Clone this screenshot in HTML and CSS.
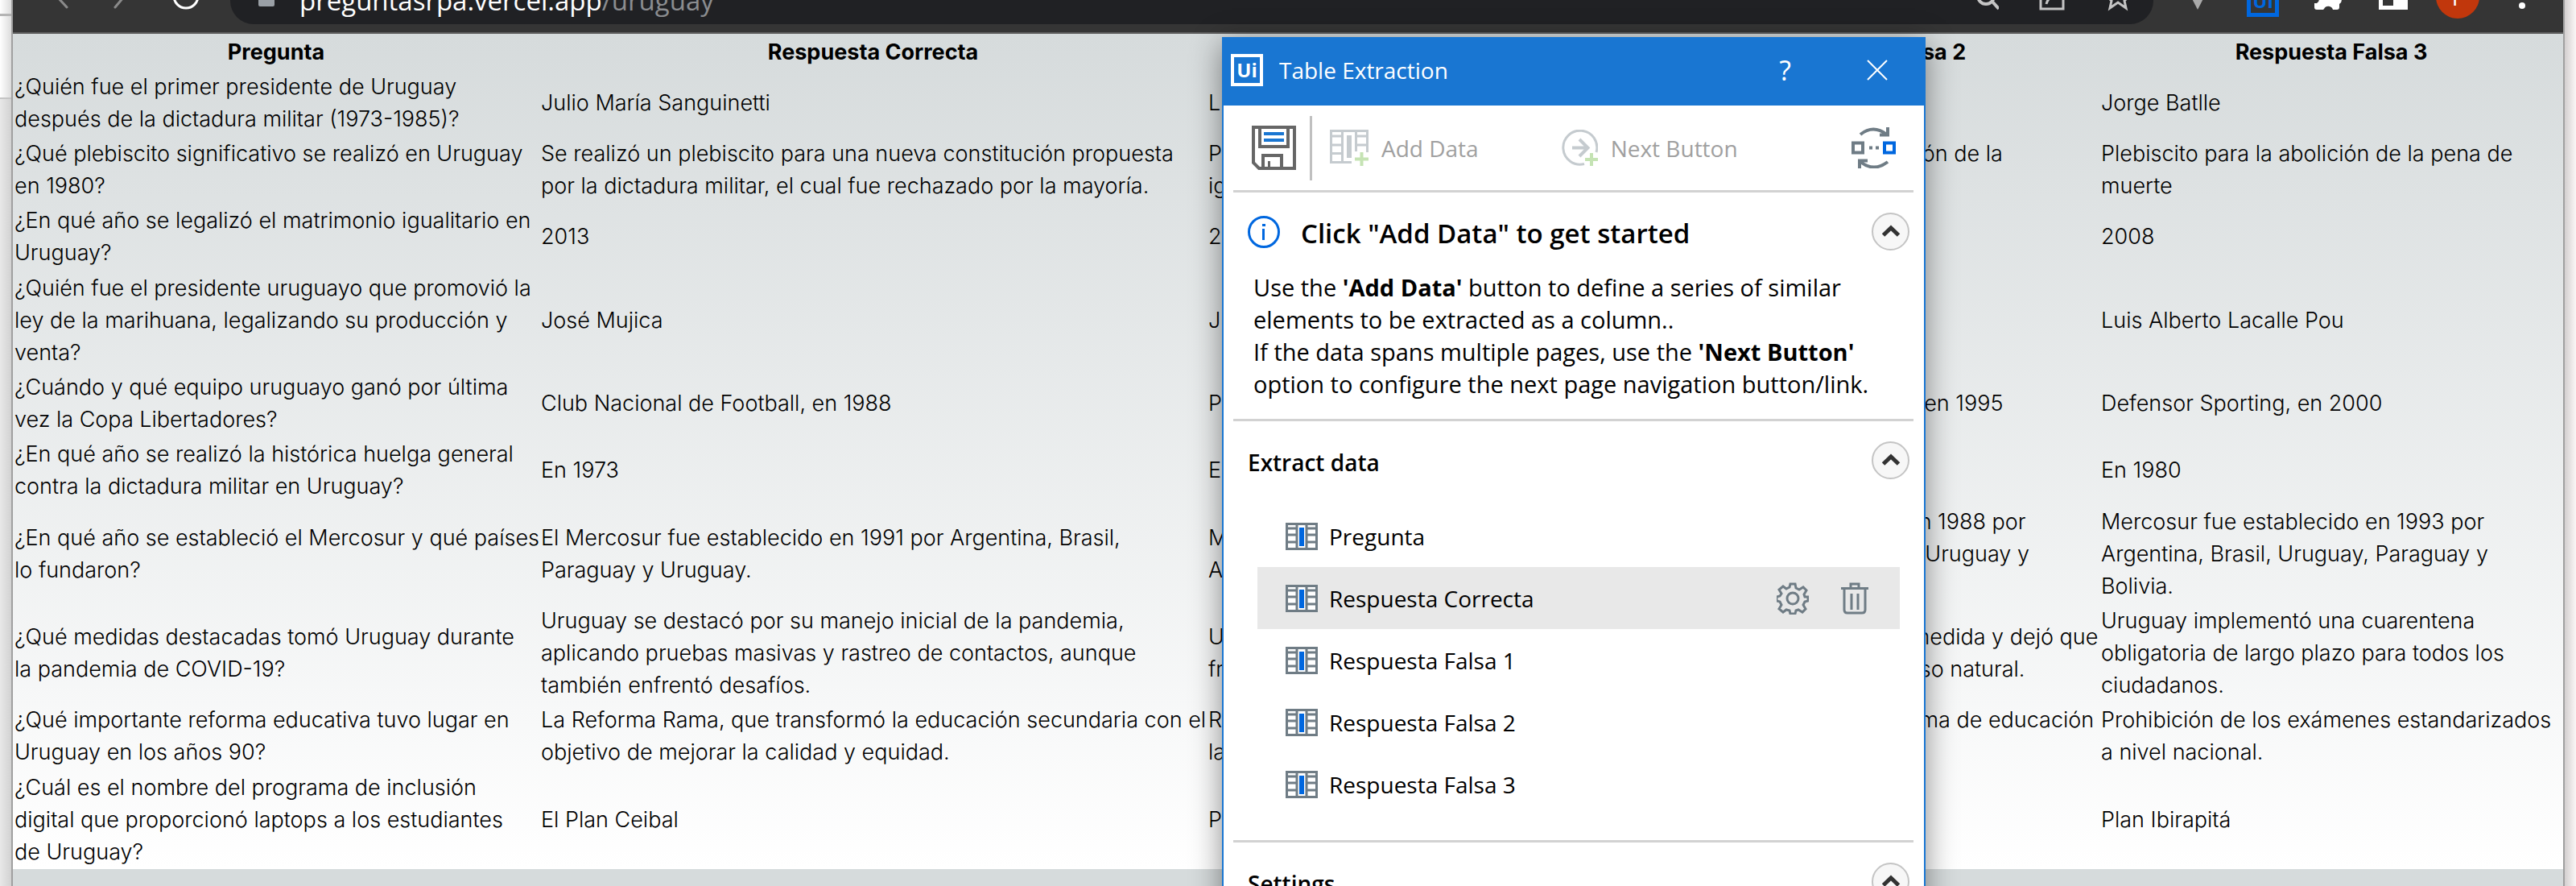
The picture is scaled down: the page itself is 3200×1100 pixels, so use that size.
FILE: index.html
```html
<!DOCTYPE html>
<html lang="es">
<head>
<meta charset="utf-8">
<title>preguntasrpa.vercel.app/uruguay</title>
<link rel="stylesheet" href="styles.css">
</head>
<body>
<svg class="sprite" aria-hidden="true">
  <symbol id="column" viewBox="0 0 40 34">
    <path fill="#fff" d="M1 1h38v32H1z"/>
    <path fill="none" stroke="#6f7c85" stroke-width="3" d="M1.500 1.500h37v31h-37zM14 2v30M26 2v30M2 7h11M2 15h11M2 24h11M27 7h11M27 15h11M27 24h11"/>
    <path fill="#0067df" d="M17 6h6v23h-6z"/>
  </symbol>
  <symbol id="chevron" viewBox="0 0 47 47">
    <path fill="none" stroke="#333" stroke-width="5" d="M14.500 28 24 19l9.500 9"/>
  </symbol>
</svg>

<div class="desktop">
  <div class="browser">
    <header class="toolbar">
      <nav class="nav">
        <button class="tool" aria-label="Atrás"><svg width="40" height="40" viewBox="0 0 40 40"><path fill="none" stroke="#8a8a8a" stroke-width="3" stroke-linecap="round" d="M32 6 20 15l12 13"/></svg></button>
        <button class="tool" aria-label="Adelante"><svg width="40" height="40" viewBox="0 0 40 40"><path fill="none" stroke="#8a8a8a" stroke-width="3" stroke-linecap="round" d="M12 6l11 9-11 13"/></svg></button>
        <button class="tool" aria-label="Recargar"><svg width="40" height="40" viewBox="0 0 40 40"><circle cx="20" cy="14" r="15" fill="none" stroke="#fff" stroke-width="3"/></svg></button>
      </nav>
      <div class="omnibox">
        <svg width="20" height="34" viewBox="0 0 20 34"><path fill="#9aa0a6" d="M2 7h16a2 2 0 0 1 2 2v13a2 2 0 0 1-2 2H2a2 2 0 0 1-2-2V9a2 2 0 0 1 2-2z"/></svg>
        <a class="url" href="#tabla">preguntasrpa.vercel.app<span class="path">/uruguay</span></a>
        <button class="tool" aria-label="Buscar"><svg width="40" height="40" viewBox="0 0 40 40"><g fill="none" stroke="#c4c4c4" stroke-width="4"><circle cx="24" cy="14" r="10"/><path d="M31 20l9 10"/></g></svg></button>
        <button class="tool" aria-label="Compartir"><svg width="40" height="40" viewBox="0 0 40 40"><path fill="none" stroke="#c4c4c4" stroke-width="3" d="M9 4v26h28V18M16 24c2-8 8-11 16-11"/></svg></button>
        <button class="tool" aria-label="Favorito"><svg width="40" height="40" viewBox="0 0 40 40"><path fill="none" stroke="#c4c4c4" stroke-width="3" d="M22 2l4 10 11 1-7 7 2 9-10-7-10 7 2-9-7-7 11-1z"/></svg></button>
      </div>
      <div class="extensions">
        <button class="tool" aria-label="Vue"><svg width="40" height="40" viewBox="0 0 40 40"><path fill="#a9a9a9" d="M4 0h32L20 31z"/></svg></button>
        <button class="tool uipath" aria-label="UiPath"><span>Ui</span></button>
        <button class="tool" aria-label="Extensiones"><svg width="40" height="40" viewBox="0 0 40 40"><path fill="#fff" d="M5 5h10a5 5 0 0 1 10 0h9v10a5 5 0 0 1 0 9v4q0 3-3 3h-5a6 6 0 0 0-11-1l-1 1H6q-3 0-3-3v-5h3a5 5 0 0 0 0-9z"/></svg></button>
        <button class="tool" aria-label="Panel lateral"><svg width="40" height="40" viewBox="0 0 40 40"><path fill="#fff" fill-rule="evenodd" d="M2 0h36v31H2zM7 5h13v21H7z"/></svg></button>
        <button class="avatar" aria-label="Perfil">F</button>
        <button class="tool" aria-label="Menú"><svg width="40" height="40" viewBox="0 0 40 40"><g fill="#fff"><circle cx="20" cy="12" r="4"/><circle cx="20" cy="26" r="4"/></g></svg></button>
      </div>
    </header>

    <main class="page" id="tabla">
      <table class="quiz">
        <colgroup><col class="c1"><col class="c2"><col class="c3"><col class="c4"><col class="c5"></colgroup>
        <thead>
          <tr><th>Pregunta</th><th>Respuesta Correcta</th><th>Respuesta Falsa 1</th><th>Respuesta Falsa 2</th><th>Respuesta Falsa 3</th></tr>
        </thead>
        <tbody>
          <tr><td>¿Quién fue el primer presidente de Uruguay<br>después de la dictadura militar (1973-1985)?</td><td>Julio María Sanguinetti</td><td>Luis Alberto Lacalle</td><td>Tabaré Vázquez</td><td>Jorge Batlle</td></tr>
          <tr><td>¿Qué plebiscito significativo se realizó en Uruguay<br>en 1980?</td><td>Se realizó un plebiscito para una nueva constitución propuesta<br>por la dictadura militar, el cual fue rechazado por la mayoría.</td><td>Plebiscito sobre la ley de<br>igualdad</td><td>Plebiscito para la privatización de la<br>deuda</td><td>Plebiscito para la abolición de la pena de<br>muerte</td></tr>
          <tr><td>¿En qué año se legalizó el matrimonio igualitario en<br>Uruguay?</td><td>2013</td><td>2010</td><td>2015</td><td>2008</td></tr>
          <tr><td>¿Quién fue el presidente uruguayo que promovió la<br>ley de la marihuana, legalizando su producción y<br>venta?</td><td>José Mujica</td><td>Julio María Sanguinetti</td><td>Tabaré Vázquez</td><td>Luis Alberto Lacalle Pou</td></tr>
          <tr><td>¿Cuándo y qué equipo uruguayo ganó por última<br>vez la Copa Libertadores?</td><td>Club Nacional de Football, en 1988</td><td>Peñarol, en 1987</td><td>Montevideo Wanderers FC, en 1995</td><td>Defensor Sporting, en 2000</td></tr>
          <tr><td>¿En qué año se realizó la histórica huelga general<br>contra la dictadura militar en Uruguay?</td><td>En 1973</td><td>En 1975</td><td>En 1985</td><td>En 1980</td></tr>
          <tr><td>¿En qué año se estableció el Mercosur y qué países<br>lo fundaron?</td><td>El Mercosur fue establecido en 1991 por Argentina, Brasil,<br>Paraguay y Uruguay.</td><td>Mercosur en 1990 por<br>Argentina y Brasil.</td><td>Mercosur fue establecido en 1988 por<br>Argentina, Brasil, Paraguay, Uruguay y<br>Chile.</td><td>Mercosur fue establecido en 1993 por<br>Argentina, Brasil, Uruguay, Paraguay y<br>Bolivia.</td></tr>
          <tr><td>¿Qué medidas destacadas tomó Uruguay durante<br>la pandemia de COVID-19?</td><td>Uruguay se destacó por su manejo inicial de la pandemia,<br>aplicando pruebas masivas y rastreo de contactos, aunque<br>también enfrentó desafíos.</td><td>Uruguay cerró todas las<br>fronteras por dos años.</td><td>Uruguay no tomó ninguna medida y dejó que<br>la pandemia siguiera su curso natural.</td><td>Uruguay implementó una cuarentena<br>obligatoria de largo plazo para todos los<br>ciudadanos.</td></tr>
          <tr><td>¿Qué importante reforma educativa tuvo lugar en<br>Uruguay en los años 90?</td><td>La Reforma Rama, que transformó la educación secundaria con el<br>objetivo de mejorar la calidad y equidad.</td><td>Reforma que privatizó<br>la educación pública.</td><td>Implementación de un sistema de educación<br>virtual.</td><td>Prohibición de los exámenes estandarizados<br>a nivel nacional.</td></tr>
          <tr><td>¿Cuál es el nombre del programa de inclusión<br>digital que proporcionó laptops a los estudiantes<br>de Uruguay?</td><td>El Plan Ceibal</td><td>Plan Artigas</td><td>Plan Futuro</td><td>Plan Ibirapitá</td></tr>
        </tbody>
      </table>
    </main>
  </div>

  <section class="dialog" role="dialog" aria-label="Table Extraction">
    <header class="titlebar">
      <span class="logo">Ui</span>
      <h1>Table Extraction</h1>
      <button class="help" aria-label="Help">?</button>
      <button class="close" aria-label="Close"><svg width="26" height="26" viewBox="0 0 26 26"><path fill="none" stroke="#fff" stroke-width="2" d="M1 1l24 24M25 1 1 25"/></svg></button>
    </header>

    <div class="actions">
      <button class="save" aria-label="Save">
        <svg width="55" height="55" viewBox="0 0 55 55"><g fill="none" stroke="#666" stroke-width="4"><path d="M2 2h51v51H9l-7-7z"/><path d="M10 3v23h35V3M14 53V37h23v16"/><path stroke-width="3" d="M21.500 44v9"/></g><path fill="#1976d2" d="M15 8h25v4H15zM15 16h25v4H15z"/></svg>
      </button>
      <button class="action" disabled>
        <svg width="48" height="45" viewBox="0 0 48 45"><path fill="none" stroke="#c5cbcf" stroke-width="3" d="M27 40.500H1.500v-39h45V28M15.500 2v38M32.500 27V2M2 8h13M2 19h13M2 29.500h13M33 8h13M33 19h13"/><path fill="#c5cbcf" d="M21 7h6v28h-6z"/><path stroke="#c5e3b4" stroke-width="4" d="M31 36.500h17M39.500 28v17"/></svg>
        Add Data
      </button>
      <button class="action next" disabled>
        <svg width="45" height="45" viewBox="0 0 45 45"><path fill="none" stroke="#c5cbcf" stroke-width="3" d="M28 42.500A21 21 0 1 1 43 28"/><path fill="none" stroke="#c5cbcf" stroke-width="4" d="M13 22.500h19M22 12l10.500 10.500L22 33"/><path stroke="#c5e3b4" stroke-width="4" d="M29 37h16M37 29v16"/></svg>
        Next Button
      </button>
      <button class="swap" aria-label="Switch">
        <svg width="55" height="51" viewBox="0 0 55 51"><g fill="none" stroke="#6f7c85" stroke-width="4"><path d="M2 19.500h12v12H2z"/><path d="M11 9Q27-4 44 9M45 0v9.500H35"/><path d="M45 43Q28 56 11 43M10 51V41.500h10"/></g><path fill="#6f7c85" d="M22 23.500h4v4h-4zM30 23.500h4v4h-4z"/><path fill="none" stroke="#0067df" stroke-width="4" d="M41 19.500h12v12H41z"/></svg>
      </button>
    </div>

    <div class="panel info">
      <div class="head">
        <svg width="40" height="40" viewBox="0 0 40 40"><circle cx="20" cy="20" r="18.500" fill="none" stroke="#0067df" stroke-width="3"/><path fill="#0067df" d="M18 10h4v3h-4zM18 16h3v14h-3z"/></svg>
        <h2>Click "Add Data" to get started</h2>
        <button class="toggle" aria-label="Collapse"><svg width="47" height="47"><use href="#chevron"/></svg></button>
      </div>
      <p>Use the <b>'Add Data'</b> button to define a series of similar<br>elements to be extracted as a column..<br>If the data spans multiple pages, use the <b>'Next Button'</b><br>option to configure the next page navigation button/link.</p>
    </div>

    <div class="panel extract">
      <div class="head">
        <h3>Extract data</h3>
        <button class="toggle" aria-label="Collapse"><svg width="47" height="47"><use href="#chevron"/></svg></button>
      </div>
      <ul class="columns">
        <li><svg width="40" height="34"><use href="#column"/></svg>Pregunta</li>
        <li class="selected"><svg width="40" height="34"><use href="#column"/></svg><span class="name">Respuesta Correcta</span>
          <button class="tool" aria-label="Edit"><svg width="40" height="40" viewBox="0 0 40 40"><g fill="none" stroke="#6f7c85" stroke-width="3"><path d="M17 2h6l1 5 4 2 5-3 4 4-3 5 1 3 4 0v5l-4 1-2 4 3 5-4 4-5-3-3 1-1 4h-6l-1-4-4-1-4 3-5-4 3-5-2-4-4-1v-5l4-1 2-3-3-5 5-4 4 3 4-2z"/><circle cx="20" cy="20" r="7"/></g></svg></button>
          <button class="tool" aria-label="Delete"><svg width="40" height="40" viewBox="0 0 40 40"><path fill="none" stroke="#6f7c85" stroke-width="3" d="M3 7.500h34M15 7V2h10v5M7 8v26q0 4 4 4h18q4 0 4-4V8M16 14v20M24 14v20"/></svg></button>
        </li>
        <li><svg width="40" height="34"><use href="#column"/></svg>Respuesta Falsa 1</li>
        <li><svg width="40" height="34"><use href="#column"/></svg>Respuesta Falsa 2</li>
        <li><svg width="40" height="34"><use href="#column"/></svg>Respuesta Falsa 3</li>
      </ul>
    </div>

    <div class="panel settings">
      <div class="head">
        <h3>Settings</h3>
        <button class="toggle" aria-label="Collapse"><svg width="47" height="47"><use href="#chevron"/></svg></button>
      </div>
    </div>
  </section>
</div>
</body>
</html>
```
FILE: styles.css
```css
* { box-sizing: border-box; }

body {
  margin: 0;
  font-family: "Open Sans", "Noto Sans", sans-serif;
  color: #000;
}

button {
  border: 0;
  padding: 0;
  background: none;
  font: inherit;
  color: inherit;
}

svg { display: block; flex: none; }
.sprite { display: none; }
h1, h2, h3, p, ul { margin: 0; padding: 0; font-weight: normal; }

.desktop {
  position: relative;
  height: 100vh;
  overflow: hidden;
  padding: 0 14px;
  background:
    linear-gradient(#b4b4b4, #b4b4b4) 0 17px / 16px 3px no-repeat,
    linear-gradient(#c4c4c4, #c4c4c4) 0 121px / 16px 2px no-repeat,
    linear-gradient(90deg, #fff, #dcdcdc) 0 0 / 14px 121px no-repeat,
    linear-gradient(90deg, #e8e8e8, #d2d2d2) 0 0 / 14px 100% no-repeat,
    linear-gradient(90deg, #d4d0d0, #faf6f6) 100% 0 / 14px 100% no-repeat;
}

.browser {
  height: 100%;
  overflow: hidden;
  border: solid #a0a0a0;
  border-width: 0 2px;
  background: #d6dbdc;
}

/* Browser toolbar: its upper part is scrolled off the top */
.toolbar {
  display: flex;
  align-items: flex-end;
  height: 42px;
  overflow: hidden;
  padding-bottom: 10px;
  border-bottom: 2px solid #5f5f5f;
  background: #353535;
}

.nav, .omnibox, .extensions {
  display: flex;
  align-items: center;
  height: 58px;
  flex: none;
}

.nav { gap: 40px; padding: 0 35px 0 35px; }
.tool { width: 40px; height: 40px; flex: none; }

.omnibox {
  flex: 1;
  gap: 31px;
  padding: 0 26px 0 35px;
  border-radius: 29px;
  background: #202124;
}

.url {
  flex: 1;
  font-size: 33px;
  line-height: 40px;
  color: #fff;
  text-decoration: none;
}
.path { color: #8b8d90; }
.omnibox .tool + .tool { margin-left: 12px; }

.extensions { gap: 41px; padding: 0 31px 0 35px; }
.uipath { border: 5px solid #0067df; color: #0067df; font-size: 24px; line-height: 24px; font-weight: 700; }
.avatar { width: 54px; height: 54px; margin: 0 -8px 10px; border-radius: 50%; background: #c1370c; color: #fff; font-size: 28px; }

/* Question table */
.page { background: linear-gradient(#d6dbdc, #fff); font-family: Inter, sans-serif; }

.quiz {
  width: 100%;
  table-layout: fixed;
  border-collapse: collapse;
  font-size: 27px;
  font-weight: 300;
  line-height: 40px;
  white-space: nowrap;
}
.c1 { width: 654px; }
.c2 { width: 829px; }
.c3 { width: 539px; }
.c4 { width: 570px; }
.c5 { width: 576px; }
.quiz th { padding: 3px 2px 1px; font-weight: 700; }
.quiz td { padding: 2px 2px 1px; }
.quiz tbody tr:nth-child(3n) td { padding-bottom: 2px; }

/* Floating tool window */
.dialog {
  position: absolute;
  left: 1518px;
  top: 46px;
  width: 874px;
  border: 2px solid #1976d2;
  background: #fff;
  box-shadow: 0 8px 36px rgba(0, 0, 0, .45);
  font-size: 28px;
  line-height: 40px;
}

.titlebar {
  display: flex;
  align-items: center;
  height: 83px;
  padding: 0 45px 6px 9px;
  background: #1976d2;
  color: #fff;
}
.logo {
  width: 40px;
  height: 40px;
  border: 4px solid #fff;
  font-size: 24px;
  line-height: 32px;
  font-weight: 700;
  text-align: center;
}
.titlebar h1 { flex: 1; margin-left: 20px; font-size: 28px; }
.help { margin-right: 94px; font-size: 34px; }

.actions {
  display: flex;
  align-items: center;
  height: 108px;
  margin: 0 13px 0 12px;
  padding: 0 22px 0 23px;
  border-bottom: 3px solid #d2d2d2;
}
.save { height: 80px; padding-right: 17px; border-right: 3px solid #c0c0c0; margin-right: 22px; }
.action { display: flex; align-items: center; gap: 16px; color: #a0a0a0; }
.next { margin-left: 103px; }
.swap { margin-left: auto; }

.panel { margin: 0 13px 0 12px; border-bottom: 3px solid #d2d2d2; }
.head { display: flex; align-items: center; padding: 0 5px 0 18px; }
.head h2, .head h3 { padding-top: 4px; font-weight: 600; }
.head h2 { margin-left: 26px; font-size: 33px; }
.head h3 { font-size: 28px; }
.toggle {
  width: 47px;
  height: 47px;
  margin-left: auto;
  border: 2px solid #c4c4c4;
  border-radius: 50%;
  background: #f7f7f7;
}
.toggle svg { margin: -2px; }

.info { padding: 25px 0 23px; }
.info p { padding: 26px 0 0 25px; font-size: 29px; white-space: nowrap; }

.extract { padding: 25px 0 31px; }
.columns { margin: 32px 17px 0 30px; list-style: none; }
.columns li { display: flex; align-items: center; height: 77px; padding-left: 35px; gap: 14px; }
.columns .selected { padding-right: 36px; background: #e8e8e8; }
.name { flex: 1; }
.columns .tool + .tool { margin-left: 23px; }

.settings { padding: 25px 0 40px; border-bottom: 0; }
```
